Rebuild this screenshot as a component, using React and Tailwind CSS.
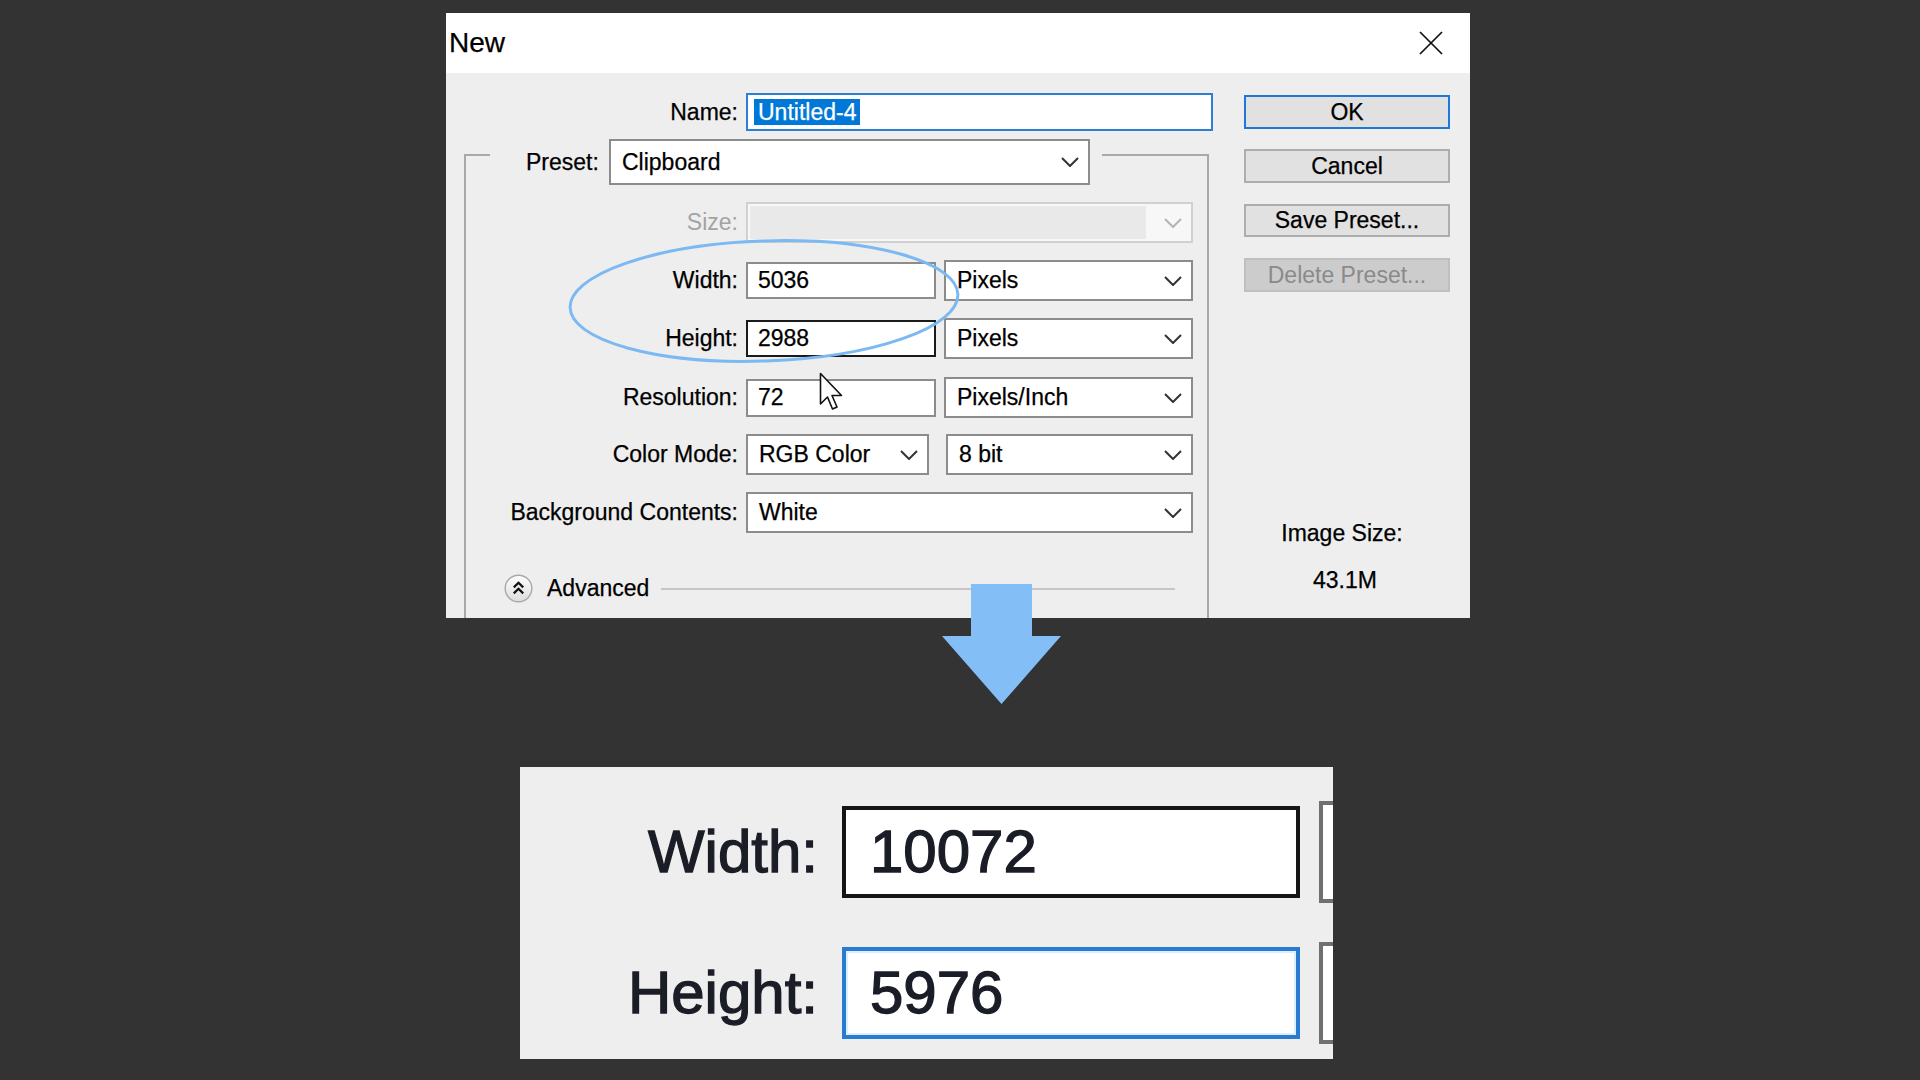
import React from 'react';

function Chevron({ color = '#333333' }) {
    return (
        <svg width="18" height="10" viewBox="0 0 18 10" className="shrink-0">
            <polyline points="1,1 9,9 17,1" fill="none" stroke={color} strokeWidth="2" />
        </svg>
    );
}

function Select({ text, className }) {
    return (
        <div className={`flex items-center justify-between border-2 border-[#8c8c8c] bg-white pl-[11px] pr-[9px] shrink-0 ${className}`}>
            <span className="whitespace-nowrap">{text}</span>
            <Chevron />
        </div>
    );
}

function Field({ value, className }) {
    return (
        <div className={`flex items-center border-2 bg-white pl-[10px] shrink-0 ${className}`}>
            <span>{value}</span>
        </div>
    );
}

function Label({ children, className = '' }) {
    return <div className={`text-right whitespace-nowrap shrink-0 ${className}`}>{children}</div>;
}

function Button({ children, className }) {
    return (
        <div className={`flex items-center justify-center border-2 ${className}`}>
            {children}
        </div>
    );
}

export default function App() {
    return (
        <div className="relative w-[1920px] h-[1080px] overflow-hidden bg-[#333333] font-['Liberation_Sans',Arial,sans-serif] flex flex-col">
            {/* dialog */}
            <div className="ml-[446px] mt-[13px] w-[1024px] h-[605px] bg-[#eeeeee] overflow-hidden flex flex-col text-[23px] text-black [-webkit-text-stroke:0.25px_#000]">
                <div className="h-[60px] shrink-0 bg-white flex items-center justify-between pl-[3px] pr-[27px]">
                    <span className="text-[28px] leading-none">New</span>
                    <svg width="24" height="24" viewBox="0 0 24 24">
                        <line x1="1" y1="1" x2="23" y2="23" stroke="#111" strokeWidth="1.7" />
                        <line x1="23" y1="1" x2="1" y2="23" stroke="#111" strokeWidth="1.7" />
                    </svg>
                </div>

                <div className="flex flex-1">
                    {/* form */}
                    <div className="w-[767px] flex flex-col">
                        <div className="mt-[20px] h-[38px] flex items-center">
                            <Label className="w-[292px]">Name:</Label>
                            <div className="ml-[8px] w-[467px] h-[38px] border-2 border-[#2c7fd6] bg-white flex items-center pl-[6px]">
                                <span className="h-[26px] leading-[26px] px-[4px] bg-[#0078d7] text-white [-webkit-text-stroke:0.25px_#fff]">Untitled-4</span>
                            </div>
                        </div>

                        <div className="mt-[23px] ml-[18px] w-[745px] flex-1 border-x-2 border-[#a8a8a8] flex flex-col">
                            <div className="-mt-[15px] h-[46px] flex items-start">
                                <div className="w-[24px] mt-[15px] border-t-2 border-[#a8a8a8]" />
                                <div className="ml-[36px] w-[74px] h-[46px] flex items-center whitespace-nowrap">Preset:</div>
                                <Select text="Clipboard" className="ml-[9px] w-[481px] h-[46px]" />
                                <div className="flex-1 ml-[12px] mt-[15px] border-t-2 border-[#a8a8a8]" />
                            </div>

                            <div className="mt-[17px] h-[41px] flex items-center">
                                <Label className="w-[272px] text-[#a3a3a3] [-webkit-text-stroke:0px]">Size:</Label>
                                <div className="ml-[8px] w-[447px] h-[41px] border-2 border-[#d0d0d0] bg-[#f7f7f7] flex items-center p-[2px]">
                                    <div className="flex-1 h-full bg-[#e9e9e9]" />
                                    <div className="w-[43px] h-full flex items-center justify-end pr-[7px]">
                                        <Chevron color="#b4b4b4" />
                                    </div>
                                </div>
                            </div>

                            <div className="mt-[17px] h-[41px] flex items-center">
                                <Label className="w-[272px]">Width:</Label>
                                <Field value="5036" className="ml-[8px] w-[190px] h-[37px] border-[#8c8c8c]" />
                                <Select text="Pixels" className="ml-[8px] w-[249px] h-[41px]" />
                            </div>

                            <div className="mt-[17px] h-[41px] flex items-center">
                                <Label className="w-[272px]">Height:</Label>
                                <Field value="2988" className="ml-[8px] w-[190px] h-[37px] border-[#1a1a1a]" />
                                <Select text="Pixels" className="ml-[8px] w-[249px] h-[41px]" />
                            </div>

                            <div className="mt-[18px] h-[41px] flex items-center">
                                <Label className="w-[272px]">Resolution:</Label>
                                <Field value="72" className="ml-[8px] w-[190px] h-[38px] border-[#8c8c8c]" />
                                <Select text="Pixels/Inch" className="ml-[8px] w-[249px] h-[41px]" />
                            </div>

                            <div className="mt-[16px] h-[41px] flex items-center">
                                <Label className="w-[272px]">Color Mode:</Label>
                                <Select text="RGB Color" className="ml-[8px] w-[183px] h-[41px]" />
                                <Select text="8 bit" className="ml-[17px] w-[247px] h-[41px]" />
                            </div>

                            <div className="mt-[17px] h-[41px] flex items-center">
                                <Label className="w-[272px]">Background Contents:</Label>
                                <Select text="White" className="ml-[8px] w-[447px] h-[41px]" />
                            </div>

                            <div className="mt-[41px] h-[29px] flex items-center">
                                <svg width="29" height="29" viewBox="0 0 29 29" className="ml-[38px] shrink-0">
                                    <defs>
                                        <linearGradient id="adv" x1="0" y1="0" x2="0" y2="1">
                                            <stop offset="0" stopColor="#ffffff" />
                                            <stop offset="1" stopColor="#dcdcdc" />
                                        </linearGradient>
                                    </defs>
                                    <circle cx="14.5" cy="14.5" r="13.3" fill="url(#adv)" stroke="#a9a9a9" strokeWidth="1.4" />
                                    <polyline points="9.8,13.4 14.5,8.8 19.2,13.4" fill="none" stroke="#111" strokeWidth="2.2" />
                                    <polyline points="9.8,19.4 14.5,14.8 19.2,19.4" fill="none" stroke="#111" strokeWidth="2.2" />
                                </svg>
                                <span className="ml-[14px]">Advanced</span>
                                <div className="flex-1 ml-[12px] mr-[32px] border-t-2 border-[#c6c6c6]" />
                            </div>
                        </div>
                    </div>

                    {/* buttons */}
                    <div className="ml-[31px] w-[206px] flex flex-col">
                        <Button className="mt-[22px] h-[34px] bg-[#e1e1e1] border-[#1e78d4]">OK</Button>
                        <Button className="mt-[20px] h-[34px] bg-[#e1e1e1] border-[#adadad]">Cancel</Button>
                        <Button className="mt-[21px] h-[33px] bg-[#e1e1e1] border-[#adadad]">Save Preset...</Button>
                        <Button className="mt-[21px] h-[34px] bg-[#cccccc] border-[#bfbfbf] text-[#8a8a8a] [-webkit-text-stroke:0px]">Delete Preset...</Button>
                        <div className="mt-[226px] pr-[10px] h-[30px] leading-[30px] text-center">Image Size:</div>
                        <div className="mt-[17px] pr-[4px] h-[30px] leading-[30px] text-center">43.1M</div>
                    </div>
                </div>
            </div>

            {/* zoomed detail */}
            <div className="ml-[520px] mt-[149px] w-[813px] h-[292px] bg-[#eeeeee] overflow-hidden flex flex-col text-[60px] text-[#1b1d26] [-webkit-text-stroke:1.3px_#1b1d26]">
                <div className="mt-[34px] h-[102px] flex items-center">
                    <Label className="w-[298px]">Width:</Label>
                    <div className="ml-[24px] w-[458px] h-[92px] shrink-0 border-[4px] border-[#151515] bg-white flex items-center pl-[24px]">10072</div>
                    <div className="ml-[19px] w-[60px] h-[102px] shrink-0 border-[4px] border-[#707070] bg-white" />
                </div>
                <div className="mt-[39px] h-[102px] flex items-center">
                    <Label className="w-[298px]">Height:</Label>
                    <div className="ml-[24px] w-[458px] h-[92px] shrink-0 border-[4px] border-[#2a7bd0] bg-white shadow-[inset_0_0_0_2px_#d6f0ff] flex items-center pl-[24px]">5976</div>
                    <div className="ml-[19px] w-[60px] h-[102px] shrink-0 border-[4px] border-[#707070] bg-white" />
                </div>
            </div>

            {/* annotations */}
            <svg className="absolute left-[560px] top-[230px]" width="410" height="140" viewBox="0 0 410 140">
                <ellipse cx="204" cy="71" rx="194" ry="60" fill="none" stroke="#7cb9f2" strokeWidth="3" transform="rotate(-2 204 71)" />
            </svg>
            <svg className="absolute left-[819px] top-[372px]" width="26" height="40" viewBox="0 0 26 40">
                <path d="M1.5 1.5 L1.5 32 L8.5 25 L13.5 37 L18 35 L13 23.5 L22.5 23.5 Z" fill="#ffffff" stroke="#111" strokeWidth="1.6" strokeLinejoin="round" />
            </svg>
            <svg className="absolute left-[942px] top-[584px]" width="119" height="120" viewBox="0 0 119 120">
                <polygon points="29,0 90,0 90,52 119,52 59.5,120 0,52 29,52" fill="#84bef6" />
            </svg>
        </div>
    );
}
